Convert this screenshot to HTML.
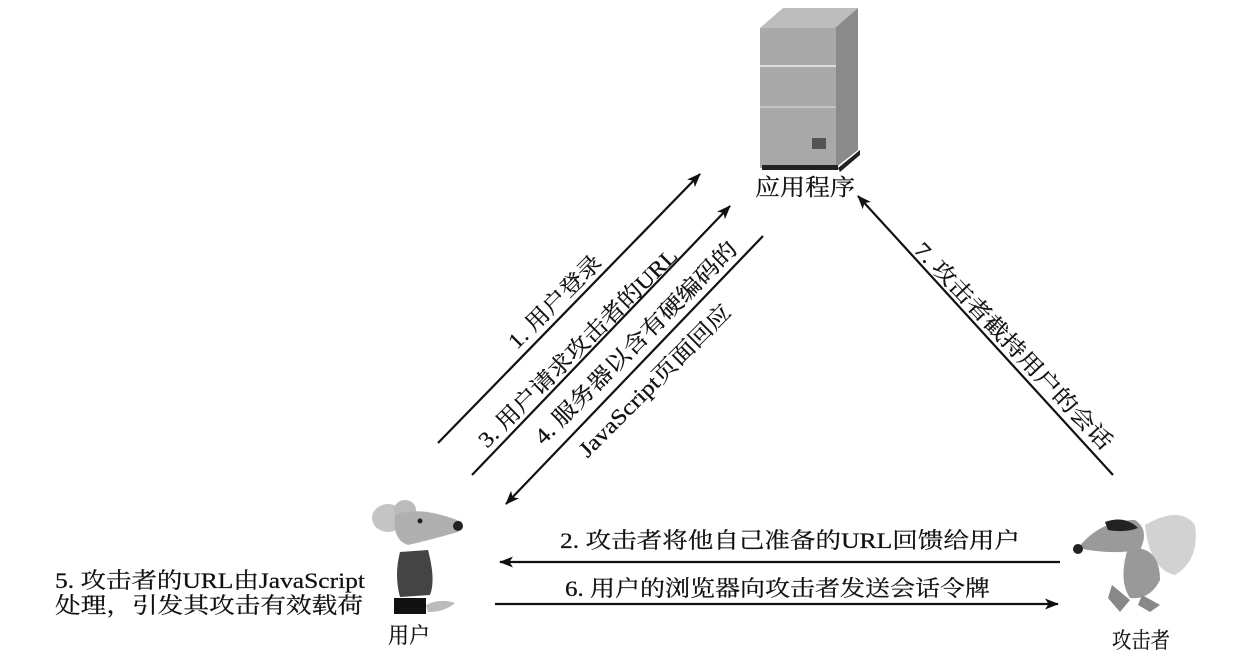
<!DOCTYPE html>
<html><head><meta charset="utf-8"><style>
html,body{margin:0;padding:0;background:#fff;}
svg{display:block;}
text{font-family:"Liberation Serif","Noto Serif CJK SC",serif;fill:#111;stroke:#111;stroke-width:0.25;}
</style></head><body>
<svg width="1258" height="667" viewBox="0 0 1258 667" xmlns="http://www.w3.org/2000/svg">
<defs>
<marker id="ah" markerWidth="14" markerHeight="11" refX="13" refY="5.5" orient="auto" markerUnits="userSpaceOnUse">
<path d="M0,0 L14,5.5 L0,11 L3.5,5.5 Z" fill="#111"/>
</marker>
</defs>
<!-- server -->
<polygon points="760,28 783,8 858,8 835,28" fill="#bdbdbd"/>
<polygon points="835,28 858,8 858,150 835,168" fill="#8a8a8a"/>
<polygon points="838,168 860,150 860,155 840,172" fill="#222"/>
<rect x="760" y="28" width="76" height="140" fill="#a9a9a9"/>
<line x1="760" y1="66" x2="836" y2="66" stroke="#eee" stroke-width="1.5"/>
<line x1="760" y1="107" x2="836" y2="107" stroke="#ddd" stroke-width="1"/>
<rect x="812" y="138" width="14" height="11" fill="#555"/>
<rect x="762" y="165" width="76" height="5" fill="#222"/>
<text x="755" y="195" font-size="23" textLength="100" lengthAdjust="spacingAndGlyphs">应用程序</text>

<!-- arrows -->
<g stroke="#111" stroke-width="2.2" marker-end="url(#ah)">
<line x1="438" y1="443" x2="700" y2="174"/>
<line x1="472" y1="475" x2="730" y2="206"/>
<line x1="763" y1="236" x2="506" y2="504"/>
<line x1="1113" y1="475" x2="858" y2="196"/>
<line x1="1060" y1="562" x2="500" y2="562"/>
<line x1="495" y1="604" x2="1058" y2="604"/>
</g>

<!-- diagonal labels -->
<text font-size="22" text-anchor="middle" textLength="122" lengthAdjust="spacingAndGlyphs" transform="translate(560,307) rotate(-45)">1. 用户登录</text>
<text font-size="22" text-anchor="middle" textLength="271" lengthAdjust="spacingAndGlyphs" transform="translate(583,353) rotate(-45)">3. 用户请求攻击者的URL</text>
<text font-size="22" text-anchor="middle" textLength="276" lengthAdjust="spacingAndGlyphs" transform="translate(641,348) rotate(-45)">4. 服务器以含有硬编码的</text>
<text font-size="22" text-anchor="middle" textLength="205" lengthAdjust="spacingAndGlyphs" transform="translate(660,386) rotate(-45)">JavaScript页面回应</text>
<text font-size="22" text-anchor="middle" textLength="276" lengthAdjust="spacingAndGlyphs" transform="translate(1008,351) rotate(46.5)">7. 攻击者截持用户的会话</text>

<!-- horizontal labels -->
<text x="560" y="548" font-size="22" textLength="460" lengthAdjust="spacingAndGlyphs">2. 攻击者将他自己准备的URL回馈给用户</text>
<text x="565" y="596" font-size="22" textLength="425" lengthAdjust="spacingAndGlyphs">6. 用户的浏览器向攻击者发送会话令牌</text>
<text x="55" y="588" font-size="22" textLength="310" lengthAdjust="spacingAndGlyphs">5. 攻击者的URL由JavaScript</text>
<text x="55" y="613" font-size="22" textLength="308" lengthAdjust="spacingAndGlyphs">处理，引发其攻击有效载荷</text>

<!-- user mouse -->
<ellipse cx="388" cy="518" rx="16" ry="14" fill="#c4c4c4"/>
<ellipse cx="405" cy="510" rx="11" ry="10" fill="#bbb"/>
<path d="M395,515 Q420,505 462,522 L458,532 Q430,540 408,545 Q392,540 395,515Z" fill="#b0b0b0"/>
<circle cx="458" cy="526" r="5" fill="#222"/>
<circle cx="420" cy="521" r="2.5" fill="#222"/>
<path d="M400,552 L428,550 Q436,580 430,595 L400,597 Q394,575 400,552Z" fill="#444"/>
<rect x="394" y="598" width="32" height="16" fill="#111"/>
<path d="M426,605 Q440,598 455,603 Q445,612 428,612Z" fill="#bbb"/>
<text x="388" y="643" font-size="22" textLength="42" lengthAdjust="spacingAndGlyphs">用户</text>

<!-- attacker mouse -->
<path d="M1145,525 Q1180,505 1195,525 Q1200,560 1175,575 Q1150,570 1145,525Z" fill="#d2d2d2"/>
<path d="M1078,548 Q1100,520 1135,520 Q1150,530 1140,550 Q1110,555 1078,548Z" fill="#9a9a9a"/>
<path d="M1105,522 Q1125,515 1138,528 Q1125,533 1108,530Z" fill="#222"/>
<circle cx="1078" cy="549" r="5" fill="#222"/>
<path d="M1128,548 Q1160,545 1160,580 Q1150,600 1130,598 Q1118,580 1128,548Z" fill="#999"/>
<path d="M1112,585 L1130,600 L1120,612 L1108,598Z" fill="#888"/>
<path d="M1142,595 L1160,605 L1150,612 L1138,605Z" fill="#888"/>
<text x="1112" y="648" font-size="22" textLength="58" lengthAdjust="spacingAndGlyphs">攻击者</text>
</svg>
</body></html>
